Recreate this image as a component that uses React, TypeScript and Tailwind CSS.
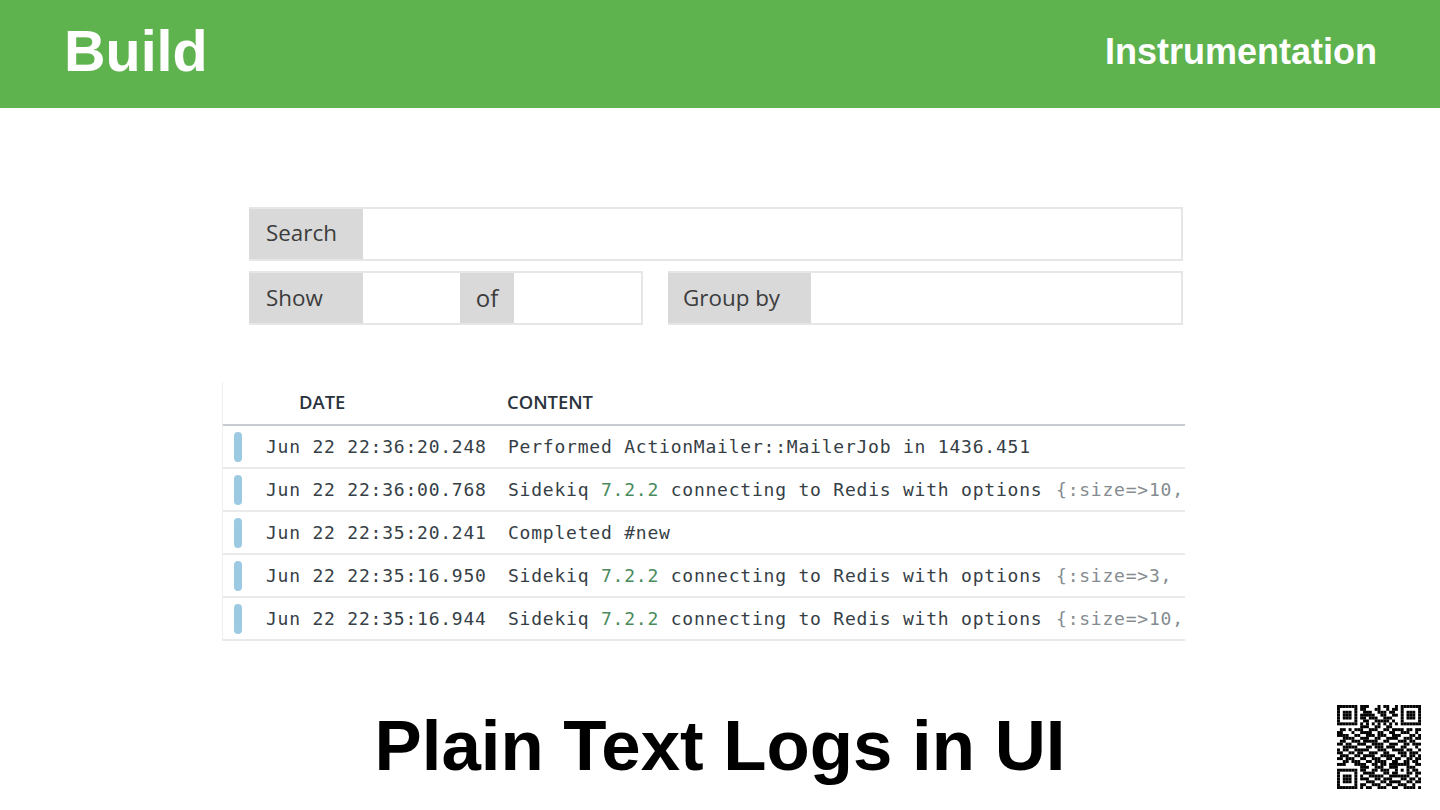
const qrRows = [
  "11111110111000101100101111111",
  "10000010110001100101101000001",
  "10111010011100111011001011101",
  "10111010111110011001101011101",
  "10111010110111001110001011101",
  "10000010011001111101001000001",
  "11111110101010101010101111111",
  "00000000111001100110000000000",
  "01101011100111001101111011011",
  "11000100111100110011001110010",
  "11110011001110111001110001101",
  "00111100111001100111100111011",
  "01100111011111001100011101100",
  "11011001110011110011100110111",
  "00111110001101110111001100010",
  "10110011111000111001111011001",
  "11001101100111001100011101110",
  "01110011011110011111001101101",
  "11011100110011100110110011011",
  "00110111001101111001100110110",
  "11100011110011011011111110011",
  "00000000111001110011100011100",
  "11111110110011011100101010110",
  "10000010011110001101100011011",
  "10111010100111110011111110010",
  "10111010111001101110001101101",
  "10111010001110011011110011011",
  "10000010110011100110011100100",
  "11111110101100111001100111101",
];

function QrCode() {
  return (
    <svg width="84" height="84" viewBox="0 0 29 29" aria-hidden="true">
      {qrRows.map((row, y) =>
        row.split("").map((cell, x) =>
          cell === "1" ? <rect key={`${x}-${y}`} x={x} y={y} width="1.02" height="1.02" fill="#000" /> : null,
        ),
      )}
    </svg>
  );
}

function FieldLabel({ text, width }: { text: string; width: string }) {
  return (
    <div className={`flex h-full items-center bg-[#d9d9d9] ${width}`}>
      <span className="text-[22.4px] leading-none text-[#3c3c3c]">{text}</span>
    </div>
  );
}

type LogRow = {
  date: string;
  text?: string;
  version?: string;
  options?: string;
};

const logs: LogRow[] = [
  { date: "Jun 22 22:36:20.248", text: "Performed ActionMailer::MailerJob in 1436.451" },
  { date: "Jun 22 22:36:00.768", version: "7.2.2", options: "{:size=>10," },
  { date: "Jun 22 22:35:20.241", text: "Completed #new" },
  { date: "Jun 22 22:35:16.950", version: "7.2.2", options: "{:size=>3," },
  { date: "Jun 22 22:35:16.944", version: "7.2.2", options: "{:size=>10," },
];

function LogLine({ log }: { log: LogRow }) {
  return (
    <div className="flex h-[43px] items-center border-b-2 border-[#e8eaec] pl-[11px]">
      <div className="h-[30px] w-[8px] shrink-0 rounded-[4px] bg-[#9ccae3]" />
      <div className="ml-[24px] w-[242px] shrink-0 whitespace-pre">{log.date}</div>
      <div className="whitespace-pre">
        {log.text ? (
          log.text
        ) : (
          <>
            Sidekiq <span className="text-[#4a8a5c]">{log.version}</span> connecting to Redis with options{" "}
            <span className="ml-[2px] text-[#858c90]">{log.options}</span>
          </>
        )}
      </div>
    </div>
  );
}

export default function App() {
  return (
    <div className="flex h-[810px] w-[1440px] flex-col overflow-hidden bg-white font-['Liberation_Sans',Arial,sans-serif]">
      <header className="flex h-[108px] shrink-0 items-center justify-between bg-[#5fb34f] pb-[5px] pl-[64px] pr-[63px] text-white">
        <h1 className="text-[57.5px] leading-none font-bold">Build</h1>
        <h2 className="text-[36px] leading-none font-bold">Instrumentation</h2>
      </header>

      <main className="flex flex-1 flex-col">
        <div className="mt-[99px] ml-[249px] flex w-[934px] flex-col gap-[10px] font-['Open_Sans',sans-serif]">
          <div className="flex h-[54px] items-center border-2 border-l-0 border-[#e6e6e6]">
            <FieldLabel text="Search" width="w-[114px] pl-[17px] pb-[2px]" />
          </div>
          <div className="flex h-[54px] gap-[25px]">
            <div className="flex h-full w-[394px] items-center border-2 border-l-0 border-[#e6e6e6]">
              <FieldLabel text="Show" width="w-[114px] pl-[17px]" />
              <div className="w-[97px]" />
              <div className="flex h-full w-[54px] items-center justify-center bg-[#d9d9d9]">
                <span className="text-[24px] leading-none text-[#3c3c3c]">of</span>
              </div>
            </div>
            <div className="flex h-full w-[515px] items-center border-2 border-l-0 border-[#e6e6e6]">
              <FieldLabel text="Group by" width="w-[143px] pl-[15px]" />
            </div>
          </div>
        </div>

        <div className="mt-[57px] ml-[222px] w-[963px] border-l border-[#eeeeee] font-['DejaVu_Sans_Mono',monospace] text-[18px] tracking-[0.78px] text-[#363e46]">
          <div className="flex h-[44px] items-center border-b-2 border-[#c8ccd0] pb-[2px] font-['Open_Sans',sans-serif] text-[18.4px] font-semibold tracking-normal text-[#2b333c]">
            <div className="ml-[76px] w-[208px]">DATE</div>
            <div>CONTENT</div>
          </div>
          {logs.map((log) => (
            <LogLine key={log.date} log={log} />
          ))}
        </div>

        <div className="mt-[64px] grid grid-cols-[1fr_auto_1fr] items-center">
          <div />
          <div className="pb-[2px] text-[70.8px] leading-none font-bold text-black">Plain Text Logs in UI</div>
          <div className="justify-self-end pr-[19px]">
            <QrCode />
          </div>
        </div>
      </main>
    </div>
  );
}
